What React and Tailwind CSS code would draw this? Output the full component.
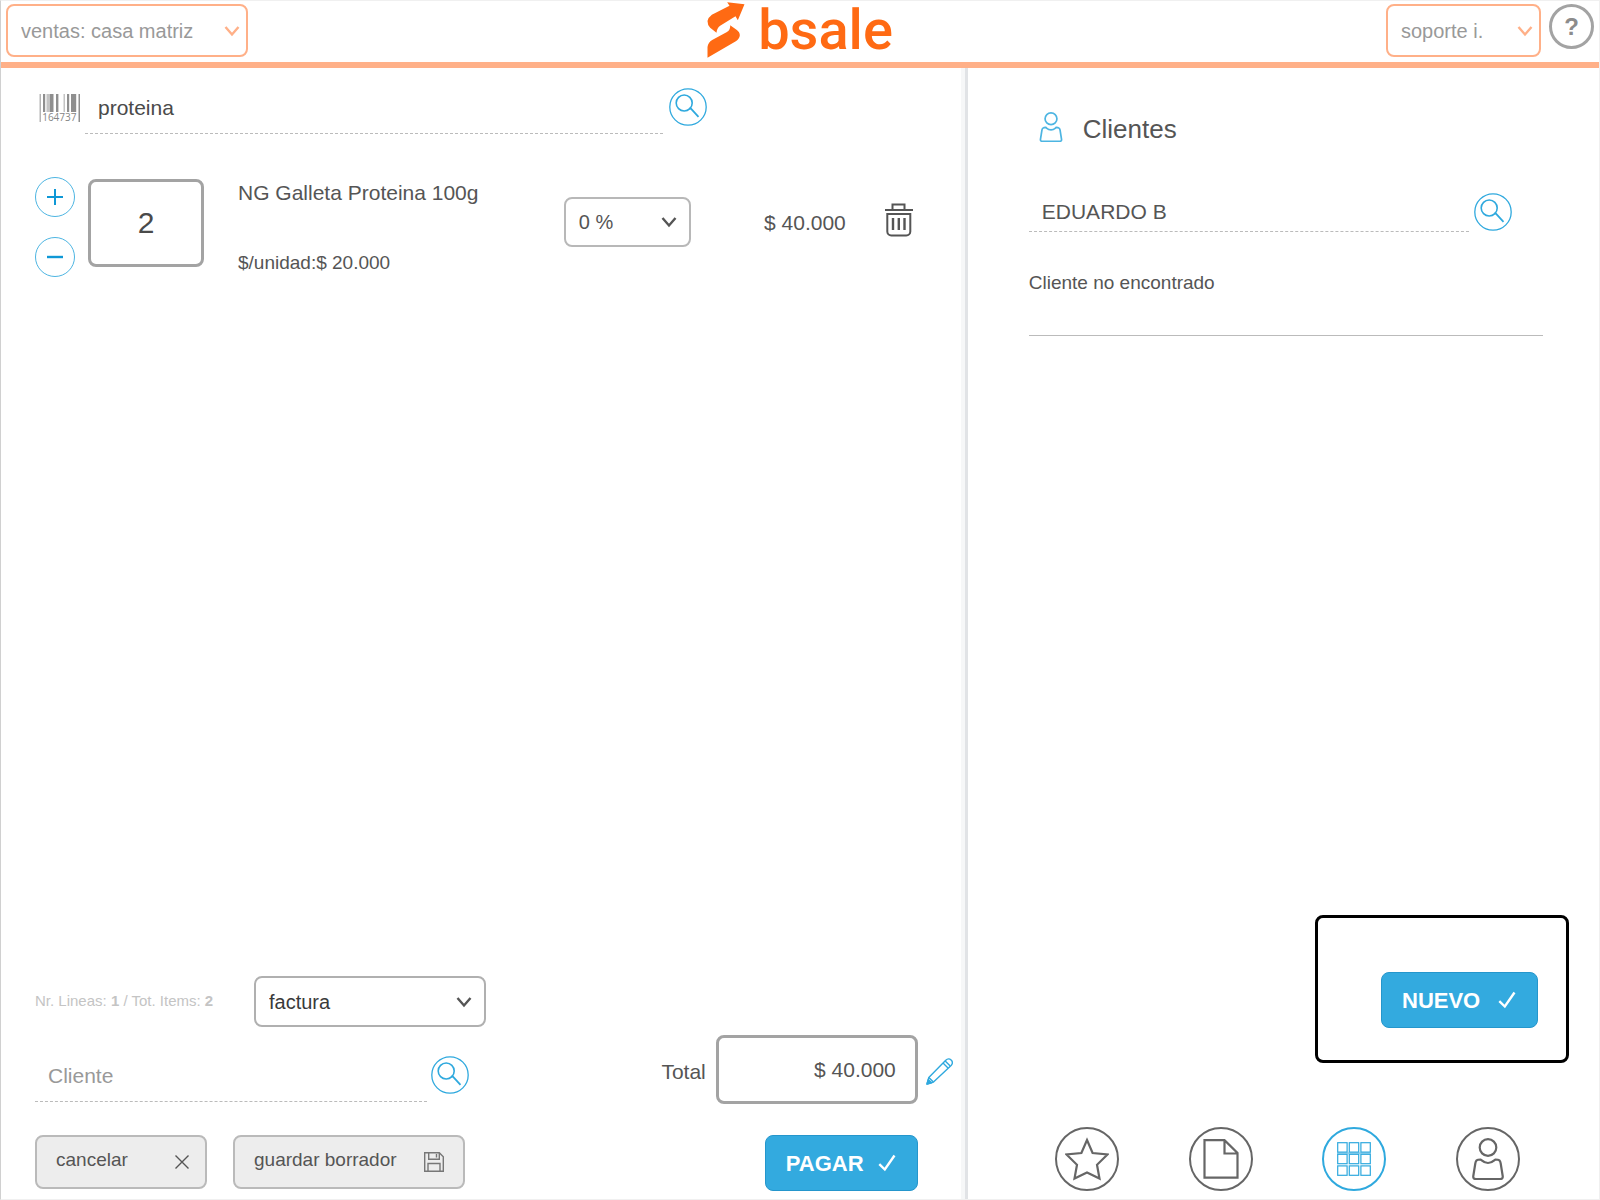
import { useState } from "react";

function Chevron({ className }) {
  return (
    <svg viewBox="0 0 16 12" fill="none" stroke="currentColor" strokeWidth="2.400" className={`pointer-events-none absolute top-1/2 h-3 w-4 -translate-y-1/2 ${className}`} aria-hidden="true">
      <path d="M1.500 2 8 9.500l6.500-7.500" />
    </svg>
  );
}

function SelectBox({ label, options, className, selectClass, chevronClass }) {
  return (
    <div className={`relative ${className}`}>
      <select aria-label={label} className={`w-full appearance-none bg-white pl-[13px] pr-8 text-[20px] outline-none ${selectClass}`}>
        {options.map((o) => (
          <option key={o}>{o}</option>
        ))}
      </select>
      <Chevron className={chevronClass} />
    </div>
  );
}

function SearchButton({ label }) {
  return (
    <button type="submit" aria-label={label} className="h-[38px] w-[38px] shrink-0 rounded-full text-[#2fa9de]">
      <svg viewBox="0 0 38 38" fill="none" stroke="currentColor" className="h-full w-full">
        <circle cx="19" cy="19" r="18.200" strokeWidth="1.300" />
        <circle cx="15.200" cy="15" r="8" strokeWidth="1.600" />
        <path d="m20.300 20.800 1.200-.6 8 8.600" strokeWidth="1.800" />
      </svg>
    </button>
  );
}

function Check() {
  return (
    <svg viewBox="0 0 18 18" fill="none" stroke="currentColor" strokeWidth="2.400" className="h-[18px] w-[18px]" aria-hidden="true">
      <path d="M1.300 10.200 6.800 15.500 16.500 1.500" />
    </svg>
  );
}

function Barcode() {
  return (
    <svg viewBox="0 0 42 32" className="h-8 w-[42px] shrink-0" aria-hidden="true">
      <g fill="#8f8f8f">
        <rect x="0.500" y="0" width="1.500" height="28" fill="#b5b5b5" />
        <rect x="4" y="0" width="2.200" height="18" />
        <rect x="7.500" y="0" width="3.500" height="18" fill="#c4c4c4" />
        <rect x="11" y="0" width="3.500" height="18" />
        <rect x="17" y="0" width="2.400" height="18" />
        <rect x="24.500" y="0" width="1.500" height="18" fill="#c4c4c4" />
        <rect x="28" y="0" width="2.200" height="18" />
        <rect x="32" y="0" width="5.200" height="18" />
        <rect x="39.500" y="0" width="1.500" height="28" />
      </g>
      <text x="3.200" y="26.800" fontSize="10" fill="#858585" fontFamily="Open Sans, sans-serif">164737</text>
    </svg>
  );
}

function LogoMark() {
  return (
    <svg viewBox="80 1 116 174" fill="#ff6a13" className="h-[58px] w-[39px]" aria-hidden="true">
      <path d="M108 96 89 81Q81 74 81 61 83 50 94 42L147 15 140 5 192 11 172 59 165 47 119 75Q109 82 108 96Z" />
      <path d="M81 171V139Q83 125 95 118L138 95Q151 88 149 74L168 87Q178 94 178 104 177 115 166 122Z" />
    </svg>
  );
}

function Trash() {
  return (
    <svg viewBox="0 0 28 34" fill="none" stroke="currentColor" strokeWidth="2" className="h-[34px] w-7" aria-hidden="true">
      <path d="M0 7h28M7.500 7V1.500h12V7" />
      <path d="M2.300 11h23v17.500a4 4 0 0 1-4 4h-15a4 4 0 0 1-4-4z" />
      <path d="M8 15v12M13.800 15v12M19.500 15v12" strokeWidth="2.400" />
    </svg>
  );
}

function Person({ className, strokeWidth = 2.2 }) {
  return (
    <svg viewBox="0 0 32 42" fill="none" stroke="currentColor" strokeWidth={strokeWidth} strokeLinejoin="round" className={className} aria-hidden="true">
      <circle cx="16" cy="9.500" r="8.300" />
      <path d="M8.500 21.500c-4 0-4.700 1-5.200 4L1.300 38c-.3 2 .6 3 2.500 3h24.400c1.900 0 2.800-1 2.500-3l-2-12.500c-.5-3-1.200-4-5.200-4-1.500.8-3 3.500-7.500 3.500s-6-2.700-7.500-3.500z" />
    </svg>
  );
}

function Pencil() {
  return (
    <svg viewBox="0 0 27 27" fill="none" stroke="currentColor" strokeWidth="1.400" strokeLinejoin="round" className="h-[27px] w-[27px]" aria-hidden="true">
      <path d="M1 26 2.800 19.500 19.500 2.500q3-3 5.600-.5t0 5.500L7.500 24z" />
      <path d="m2.800 19.500 4.700 4.500M17 5l5 5M19.200 3l5 5" />
      <path d="M1 26l1.200-4.400 3.400 3.200z" fill="currentColor" />
    </svg>
  );
}

function Floppy() {
  return (
    <svg viewBox="0 0 20 20" fill="none" stroke="currentColor" strokeWidth="1.400" className="h-5 w-5 text-[#777]" aria-hidden="true">
      <path d="M.7.7h14.600l4 4v14.600H.7z" />
      <path d="M4.700.7v6.500h10.600V.7M12.500 2v3.500M4 19v-7.500h12V19" />
    </svg>
  );
}

function NavButton({ label, active, children }) {
  return (
    <button type="button" aria-label={label} className={`flex h-16 w-16 items-center justify-center rounded-full border-2 ${active ? "border-[#2fa9de] text-[#2fa9de]" : "border-[#666] text-[#666]"}`}>
      {children}
    </button>
  );
}

function Header() {
  return (
    <header className="grid grid-cols-[1fr_auto_1fr] items-start border-b-[6px] border-[#ffb088]">
      <div className="pl-[5px] pt-[3px]">
        <SelectBox label="Sucursal" options={["ventas: casa matriz"]} className="w-[242px]" selectClass="h-[53px] rounded-lg border-2 border-[#ffb088] text-[#999]" chevronClass="right-2 text-[#ffb088]" />
      </div>
      <a href="#inicio" aria-label="bsale" className="flex h-[61px] items-start">
        <LogoMark />
        <span className="ml-3 font-[Roboto,sans-serif] text-[56px] font-medium leading-[58px] text-[#ff6a13]">bsale</span>
      </a>
      <div className="flex justify-end gap-2 pr-[5px] pt-[3px]">
        <SelectBox label="Usuario" options={["soporte i."]} className="w-[155px]" selectClass="h-[53px] rounded-lg border-2 border-[#ffb088] text-[#999]" chevronClass="right-2 text-[#ffb088]" />
        <button type="button" aria-label="Ayuda" className="flex h-[45px] w-[45px] items-center justify-center rounded-full border-[3px] border-[#a3a3a3] text-[24px] font-bold text-[#8c8c8c]">
          ?
        </button>
      </div>
    </header>
  );
}

function LineItem() {
  const [qty, setQty] = useState("2");
  const step = (n) => setQty(String(Math.max(0, Number(qty) + n)));
  const round = "flex h-10 w-10 items-center justify-center rounded-full border border-[#4db5e2] text-[#0f98d6]";
  return (
    <li className="flex items-start">
      <div className="flex flex-col gap-5">
        <button type="button" aria-label="Agregar uno" onClick={() => step(1)} className={round}>
          <svg viewBox="0 0 16 16" stroke="currentColor" strokeWidth="2" className="h-4 w-4"><path d="M0 8h16M8 0v16" /></svg>
        </button>
        <button type="button" aria-label="Quitar uno" onClick={() => step(-1)} className={round}>
          <svg viewBox="0 0 16 16" stroke="currentColor" strokeWidth="2.400" className="h-4 w-4"><path d="M0 8h16" /></svg>
        </button>
      </div>
      <input aria-label="Cantidad" value={qty} onChange={(e) => setQty(e.target.value)} className="ml-[13px] mt-[2px] h-[88px] w-[116px] rounded-lg border-[3px] border-[#a3a3a3] text-center text-[30px] text-[#4a4a4a] outline-none" />
      <div className="ml-[34px] flex flex-1 flex-col gap-[46px] pt-1">
        <h3 className="text-[21px] leading-6">NG Galleta Proteina 100g</h3>
        <p className="text-[19px] leading-6">$/unidad:$ 20.000</p>
      </div>
      <SelectBox label="Descuento" options={["0 %"]} className="mt-5 w-[127px]" selectClass="h-[50px] rounded-lg border-2 border-[#b8b8b8]" chevronClass="right-[14px]" />
      <p className="mt-[34px] w-[155px] text-right text-[21px] leading-6">$ 40.000</p>
      <button type="button" aria-label="Eliminar" className="ml-[39px] mt-[26px]">
        <Trash />
      </button>
    </li>
  );
}

function SalePanel() {
  return (
    <section className="flex w-[60.500%] flex-col border-r-[3px] border-[#e1e3e6] shadow-[inset_-4px_0_0_#f6f7f8]">
      <form className="ml-[38px] mt-5 flex w-[668px] max-w-full items-start" onSubmit={(e) => e.preventDefault()}>
        <div className="pt-[6px]">
          <Barcode />
        </div>
        <input aria-label="Producto" defaultValue="proteina" className="ml-1 h-[46px] min-w-0 flex-1 border-b border-dashed border-[#bbb] pb-[6px] pl-[13px] text-[21px] text-[#4a4a4a] outline-none" />
        <div className="ml-[6px]">
          <SearchButton label="Buscar producto" />
        </div>
      </form>
      <ul className="mt-[43px] pl-[34px] pr-[52px]">
        <LineItem />
      </ul>

      <div className="mt-auto pb-2 pl-[34px] pr-3">
        <div className="flex items-center">
          <p className="w-[219px] text-[15px] text-[#c4c4c4]">
            Nr. Lineas: <b>1</b> / Tot. Items: <b>2</b>
          </p>
          <SelectBox label="Documento" options={["factura"]} className="w-[232px]" selectClass="h-[51px] rounded-lg border-2 border-[#b0b0b0] text-[#3a3a3a]" chevronClass="right-[14px]" />
        </div>
        <div className="mt-2 flex items-end justify-between">
          <form className="flex w-[434px] items-start pb-[2px]" onSubmit={(e) => e.preventDefault()}>
            <input aria-label="Cliente" placeholder="Cliente" className="h-[46px] min-w-0 flex-1 border-b border-dashed border-[#bbb] pb-[6px] pl-[13px] text-[21px] outline-none placeholder:text-[#999]" />
            <div className="ml-1">
              <SearchButton label="Buscar cliente" />
            </div>
          </form>
          <div className="flex items-center">
            <label htmlFor="total" className="mr-[10px] pt-1 text-[21px] leading-6">Total</label>
            <input id="total" defaultValue="$ 40.000" className="h-[69px] w-[202px] rounded-lg border-[3px] border-[#a3a3a3] pr-[19px] text-right text-[21px] text-[#555] outline-none" />
            <button type="button" aria-label="Editar total" className="ml-2 pt-1 text-[#2fa9de]">
              <Pencil />
            </button>
          </div>
        </div>
        <div className="mt-[31px] flex items-start">
          <button type="button" className="flex h-[54px] w-[172px] items-center justify-between rounded-lg border-2 border-[#bababa] bg-[#ededed] pb-1 pl-[19px] pr-4 text-[19px]">
            cancelar
            <svg viewBox="0 0 14 14" stroke="currentColor" strokeWidth="1.400" className="mt-1 h-[14px] w-[14px]" aria-hidden="true"><path d="m.5.5 13 13M13.500.5l-13 13" /></svg>
          </button>
          <button type="button" className="ml-[26px] flex h-[54px] w-[232px] items-center justify-between rounded-lg border-2 border-[#bababa] bg-[#ededed] pb-1 pl-[19px] pr-[19px] text-[19px]">
            guardar borrador
            <span className="mt-1">
              <Floppy />
            </span>
          </button>
          <button type="button" className="ml-auto mr-[35px] flex h-14 w-[153px] items-center justify-between rounded-lg border border-[#2596cc] bg-[#33aadf] pl-5 pr-[21px] text-[22px] font-bold text-white">
            PAGAR
            <Check />
          </button>
        </div>
      </div>
    </section>
  );
}

function ClientPanel() {
  return (
    <section className="flex flex-1 flex-col pt-11">
      <div className="pl-[61px] pr-14">
        <h2 className="flex items-start gap-5 pl-[10px] text-[26px] leading-[34px]">
          <Person className="h-[30px] w-6 text-[#4db5e2]" strokeWidth={2.4} />
          Clientes
        </h2>
        <form className="mr-[31px] mt-[44px] flex items-start" onSubmit={(e) => e.preventDefault()}>
          <input aria-label="Buscar cliente por nombre" defaultValue="EDUARDO B" className="h-[42px] min-w-0 flex-1 border-b border-dashed border-[#bbb] pl-[13px] pt-[2px] text-[21px] text-[#555] outline-none" />
          <div className="ml-[5px] mt-[3px]">
            <SearchButton label="Buscar" />
          </div>
        </form>
        <p className="mt-[33px] border-b border-[#bbb] pb-10 text-[19px] leading-6">Cliente no encontrado</p>
      </div>

      <div className="mt-auto pb-2">
        <div className="ml-auto mr-[30px] flex h-[148px] w-[254px] items-end justify-end rounded-lg border-[3px] border-black pb-8 pr-7">
          <button type="button" className="flex h-14 w-[157px] items-center justify-between rounded-lg border border-[#2596cc] bg-[#33aadf] pl-5 pr-[21px] text-[22px] font-bold text-white">
            NUEVO
            <Check />
          </button>
        </div>
        <nav aria-label="Secciones" className="mt-16 flex justify-between pl-[87px] pr-[79px]">
          <NavButton label="Favoritos">
            <svg viewBox="0 0 44 44" fill="none" stroke="currentColor" strokeWidth="2.200" className="h-11 w-11">
              <path d="M22 3 27.600 16 42.500 17.500 32 27.800 34.500 41.500 22 35.500 9.500 41.500 12 27.800 1.500 17.500 16.400 16Z" />
            </svg>
          </NavButton>
          <NavButton label="Documentos">
            <svg viewBox="0 0 36 40" fill="none" stroke="currentColor" strokeWidth="2.200" className="h-10 w-9">
              <path d="M1.500 1.200h20L34.500 14v24.700h-33zM21.500 1.200V14.500h13" />
            </svg>
          </NavButton>
          <NavButton label="Productos" active>
            <svg viewBox="0 0 34 34" fill="none" stroke="currentColor" strokeWidth="1.200" className="h-[34px] w-[34px]">
              {[0.7, 12.3, 23.9].map((y) => [0.7, 12.3, 23.9].map((x) => <rect key={`${x}-${y}`} x={x} y={y} width="9.400" height="9.400" />))}
              <path d="M0 11.200h34" strokeWidth="2" strokeOpacity=".5" />
            </svg>
          </NavButton>
          <NavButton label="Clientes">
            <Person className="h-[42px] w-8" />
          </NavButton>
        </nav>
      </div>
    </section>
  );
}

export default function App() {
  return (
    <div className="flex min-h-screen flex-col border border-[#f0f0f0] border-l-[#d0d0d0] bg-white font-['Liberation_Sans',Arial,sans-serif] text-[#555]">
      <Header />
      <main className="flex flex-1">
        <SalePanel />
        <ClientPanel />
      </main>
    </div>
  );
}
